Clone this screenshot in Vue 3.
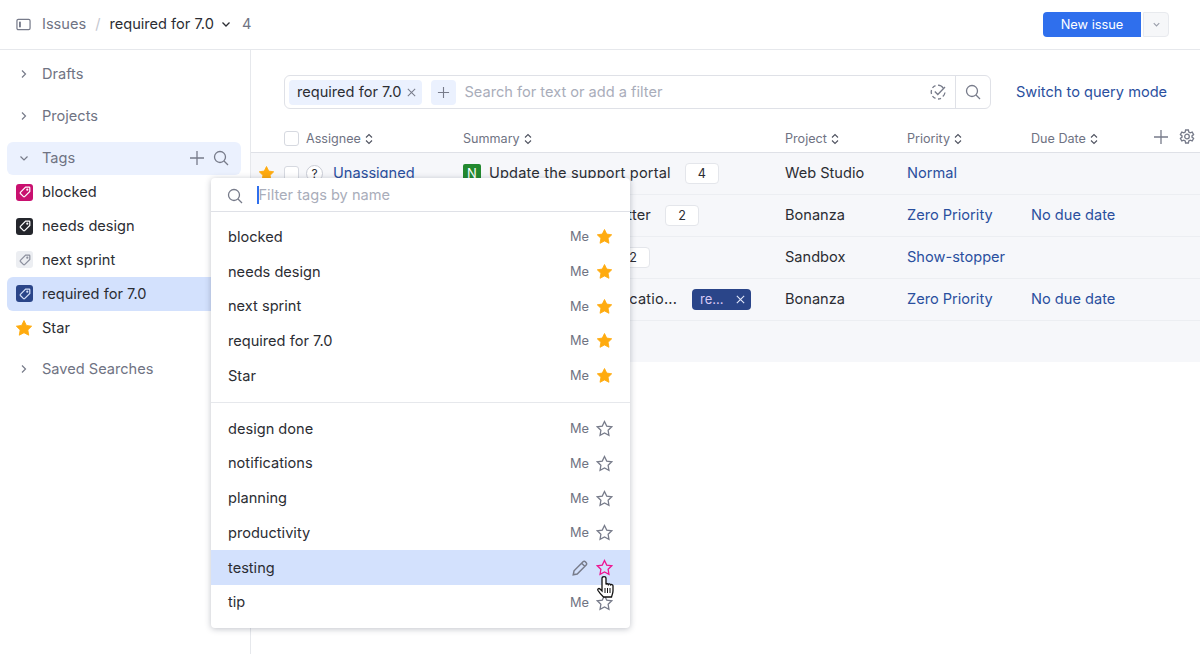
<template>
  <div class="page">
    <header class="topbar">
      <svg class="ico panel" viewBox="0 0 16 16"><rect x="1" y="2.5" width="14" height="11" rx="1.5" /><rect class="solid" x="3.2" y="5" width="2" height="6" /></svg>
      <span class="crumb">Issues</span>
      <span class="slash">/</span>
      <span class="current">required for 7.0</span>
      <svg class="ico caret" viewBox="0 0 12 12"><path d="M2.5 4.5 6 8l3.5-3.5" /></svg>
      <span class="total">4</span>
      <div class="top-actions">
        <button class="btn-new">New issue</button>
        <button class="btn-more"><svg viewBox="0 0 12 12"><path d="M3 4.5 6 7.5l3-3" /></svg></button>
      </div>
    </header>

    <div class="body">
      <aside class="sidebar">
        <div class="section"><svg class="chev" viewBox="0 0 12 12"><path d="M4 2.5 7.5 6 4 9.5" /></svg>Drafts</div>
        <div class="section"><svg class="chev" viewBox="0 0 12 12"><path d="M4 2.5 7.5 6 4 9.5" /></svg>Projects</div>
        <div class="section tags-head">
          <svg class="chev" viewBox="0 0 12 12"><path d="M2.5 4.5 6 8l3.5-3.5" /></svg>Tags
          <span class="head-icons">
            <svg class="ico plus" viewBox="0 0 16 16"><path d="M8 1v14M1 8h14" /></svg>
            <svg class="ico mag" viewBox="0 0 16 16"><circle cx="7" cy="7" r="5.5" /><path d="m11 11 4 4" /></svg>
          </span>
        </div>
        <div v-for="tag in sideTags" :key="tag.name" class="tag-row" :class="{ selected: tag.selected }">
          <span v-if="tag.color" class="tag-box" :style="{ background: tag.color }">
            <svg viewBox="0 0 14 14" :style="{ stroke: tag.stroke }"><path d="M7.6 2.2h3.6a.6.6 0 0 1 .6.6v3.6L6.6 11.6a.8.8 0 0 1-1.1 0L2.4 8.5a.8.8 0 0 1 0-1.1z" /><circle cx="9.3" cy="4.7" r=".5" /></svg>
          </span>
          <svg v-else class="side-star" viewBox="0 0 16 16"><path :d="starPath" /></svg>
          {{ tag.name }}
        </div>
        <div class="section saved"><svg class="chev" viewBox="0 0 12 12"><path d="M4 2.5 7.5 6 4 9.5" /></svg>Saved Searches</div>
      </aside>

      <main class="main">
        <div class="search-line">
          <div class="searchbox">
            <span class="chip">required for 7.0<svg viewBox="0 0 12 12"><path d="m2 2 8 8M10 2l-8 8" /></svg></span>
            <span class="add-filter"><svg viewBox="0 0 14 14"><path d="M7 1v12M1 7h12" /></svg></span>
            <span class="placeholder">Search for text or add a filter</span>
            <svg class="ico check" viewBox="0 0 16 16"><path d="M13.5 4.5A7 7 0 0 0 8 1.2M5.5 1.7a7 7 0 0 0-3 2.2M1.5 6a7 7 0 0 0 0 4M2.5 12.2a7 7 0 0 0 3 2.2M8 15a7 7 0 0 0 3-.7M12.8 12.5A7 7 0 0 0 15 8.5" /><path d="m4.8 7.5 3 3L15 3" /></svg>
            <span class="search-btn"><svg class="ico mag" viewBox="0 0 16 16"><circle cx="7" cy="7" r="5.5" /><path d="m11 11 4 4" /></svg></span>
          </div>
          <a class="query-link">Switch to query mode</a>
        </div>

        <div class="table-head">
          <span class="cell-star"></span>
          <span class="head-a"><span class="checkbox"></span><span class="th">Assignee<svg viewBox="0 0 8 12"><path d="M1 4.5 4 1.5l3 3M1 7.5l3 3 3-3" /></svg></span></span>
          <span class="th">Summary<svg viewBox="0 0 8 12"><path d="M1 4.5 4 1.5l3 3M1 7.5l3 3 3-3" /></svg></span>
          <span class="th">Project<svg viewBox="0 0 8 12"><path d="M1 4.5 4 1.5l3 3M1 7.5l3 3 3-3" /></svg></span>
          <span class="th">Priority<svg viewBox="0 0 8 12"><path d="M1 4.5 4 1.5l3 3M1 7.5l3 3 3-3" /></svg></span>
          <span class="th">Due Date<svg viewBox="0 0 8 12"><path d="M1 4.5 4 1.5l3 3M1 7.5l3 3 3-3" /></svg></span>
          <span class="table-tools">
            <svg class="ico plus" viewBox="0 0 16 16"><path d="M8 1v14M1 8h14" /></svg>
            <svg class="ico gear" viewBox="0 0 16 16"><path d="M6.6 1h2.8l.4 2 1.4.8 2-.7 1.4 2.4-1.6 1.4v1.2l1.6 1.4-1.4 2.4-2-.7-1.4.8-.4 2H6.600l-.4-2-1.400-.8-2 .7L1.400 9.500 3 8.100V6.900L1.400 5.500l1.400-2.400 2 .7 1.400-.8z" /><circle cx="8" cy="7.500" r="2.300" /></svg>
          </span>
        </div>

        <div class="rows">
          <div v-for="row in issues" :key="row.project + row.priority" class="row">
            <span class="cell-star"><svg v-if="row.starred" class="side-star" viewBox="0 0 16 16"><path :d="starPath" /></svg></span>
            <span class="head-a">
              <span class="checkbox"></span>
              <span class="unknown">?</span>
              <a class="link">Unassigned</a>
            </span>
            <span class="summary">
              <span class="type-badge">N</span>
              <span class="summary-text" :style="{ width: row.width + 'px' }">{{ row.summary }}</span>
              <span v-if="row.count" class="count">{{ row.count }}</span>
              <span v-if="row.tag" class="issue-tag"><i>re...</i><svg viewBox="0 0 12 12"><path d="m2 2 8 8M10 2l-8 8" /></svg></span>
            </span>
            <span class="project">{{ row.project }}</span>
            <a class="link">{{ row.priority }}</a>
            <a class="link">{{ row.due }}</a>
          </div>
          <div class="rows-end"></div>
        </div>
      </main>
    </div>

    <div class="popup">
      <div class="popup-search">
        <svg class="ico mag" viewBox="0 0 16 16"><circle cx="7" cy="7" r="5.500" /><path d="m11 11 4 4" /></svg>
        <span class="caret-line"></span>
        <span class="placeholder">Filter tags by name</span>
      </div>
      <div class="popup-list first">
        <div v-for="name in starredTags" :key="name" class="popup-item">
          <span class="item-name">{{ name }}</span>
          <span class="me">Me</span>
          <svg class="item-star on" viewBox="0 0 16 16"><path :d="starPath" /></svg>
        </div>
      </div>
      <div class="popup-list second">
        <div v-for="name in otherTags" :key="name" class="popup-item" :class="{ hover: name === 'testing' }">
          <span class="item-name">{{ name }}</span>
          <svg v-if="name === 'testing'" class="ico pencil" viewBox="0 0 16 16"><path d="M2 14l.7-3.500 8-8a1.400 1.400 0 0 1 2 0l.8.800a1.400 1.400 0 0 1 0 2l-8 8zM9.500 3.800l2.700 2.700" /></svg>
          <span v-else class="me">Me</span>
          <svg class="item-star" viewBox="0 0 16 16"><path :d="starPath" /></svg>
        </div>
      </div>
      <svg class="hand" viewBox="0 0 17 22"><path d="M5 2.500c0-2.400 4-2.400 4 0v6c.3-1 2-1 2.300 0 .4-.8 2-.7 2.200.3.600-.6 2.500-.3 2.500 1v5c0 2.500-1 4-1.500 6.200H6.500C5 19.500 2.500 17 1 14.500c-.8-1.500.8-2.700 2-1.500L5 15z" /><path class="lines" d="M8 12v5M10.500 12v5M13 12v5" /></svg>
    </div>
  </div>
</template>

<script setup>
const starPath = 'M8 1.400 10.100 5.700l4.700.7-3.400 3.300.8 4.700L8 12.200l-4.200 2.200.8-4.700-3.400-3.300 4.700-.7z'

const sideTags = [
  { name: 'blocked', color: '#c9106f', stroke: '#fff' },
  { name: 'needs design', color: '#24262c', stroke: '#fff' },
  { name: 'next sprint', color: '#eceef2', stroke: '#8a8e9c' },
  { name: 'required for 7.0', color: '#2a4589', stroke: '#d5e1fb', selected: true },
  { name: 'Star' },
]

const issues = [
  { starred: true, summary: 'Update the support portal', project: 'Web Studio', count: '4', priority: 'Normal', due: '' },
  { summary: 'Add promo newsletter', width: 162, count: '2', project: 'Bonanza', priority: 'Zero Priority', due: 'No due date' },
  { summary: 'Fix login page', width: 113, count: '2', project: 'Sandbox', priority: 'Show-stopper', due: '' },
  { summary: 'Improve push notificatio...', width: 188, tag: true, project: 'Bonanza', priority: 'Zero Priority', due: 'No due date' },
]

const starredTags = ['blocked', 'needs design', 'next sprint', 'required for 7.0', 'Star']
const otherTags = ['design done', 'notifications', 'planning', 'productivity', 'testing', 'tip']
</script>

<style>
html, body {
  margin: 0;
  background: #fff;
}
</style>

<style scoped>
.page {
  position: relative;
  width: 1200px;
  height: 654px;
  overflow: hidden;
  font-family: Inter, "Liberation Sans", sans-serif;
  font-size: 14.6px;
  color: #2b2d33;
  background: #fff;
}

svg {
  fill: none;
  flex: none;
}

.ico {
  stroke: #777b8a;
  stroke-width: 1.300;
}

.topbar {
  height: 48px;
  padding-bottom: 1px;
  display: flex;
  align-items: center;
  padding-left: 16px;
  border-bottom: 1px solid #e6e8ec;
}

.panel {
  width: 15px;
  height: 15px;
  margin-right: 11px;
}

.panel .solid {
  fill: #777b8a;
  stroke: none;
}

.crumb {
  color: #6f7383;
}

.slash {
  color: #c4c7d0;
  margin: 0 9px 0 9px;
}

.caret {
  width: 12px;
  height: 12px;
  margin: 0 0 0 6px;
  stroke: #2b2d33;
}

.total {
  color: #6f7383;
  margin-left: 10px;
}

.top-actions {
  margin-left: auto;
  margin-right: 31px;
  display: flex;
  gap: 2px;
}

.btn-new {
  width: 98px;
  height: 25px;
  border: 0;
  border-radius: 4px 0 0 4px;
  background: #2f6fed;
  color: #fff;
  font: 12.800px Inter, sans-serif;
  padding: 0;
}

.btn-more {
  width: 26px;
  height: 25px;
  padding: 0;
  border: 1px solid #e8eaee;
  border-radius: 0 4px 4px 0;
  background: #f6f7f9;
  display: flex;
  align-items: center;
  justify-content: center;
}

.btn-more svg {
  width: 11px;
  height: 11px;
  stroke: #9a9eab;
  stroke-width: 1.200;
}

.body {
  display: flex;
  height: 604px;
}

.sidebar {
  width: 251px;
  box-sizing: border-box;
  flex: none;
  border-right: 1px solid #e6e8ec;
  padding: 7.500px 9px 0 7px;
}

.section {
  height: 33px;
  margin-bottom: 9px;
  display: flex;
  align-items: center;
  border-radius: 6px;
  color: #6f7383;
}

.chev {
  width: 12px;
  height: 12px;
  margin: 0 12px 0 11px;
  stroke: #777b8a;
  stroke-width: 1.200;
}

.tags-head {
  background: #ebf1fe;
  margin-bottom: 1px;
}

.head-icons {
  margin-left: auto;
  margin-right: 12px;
  display: flex;
  align-items: center;
  gap: 8px;
}

.head-icons .plus,
.head-icons .mag {
  width: 16px;
  height: 16px;
}

.tag-row {
  height: 33.800px;
  display: flex;
  align-items: center;
  border-radius: 6px;
}

.tag-row.selected {
  background: #d3e1fd;
}

.tag-box {
  width: 17px;
  height: 17px;
  border-radius: 3px;
  margin: 0 9px;
  display: flex;
  align-items: center;
  justify-content: center;
}

.tag-box svg {
  width: 14px;
  height: 14px;
  stroke-width: 1.200;
}

.side-star {
  width: 18px;
  height: 18px;
  fill: #ffab0f;
  stroke: #ffab0f;
  stroke-width: 0.800;
  stroke-linejoin: round;
  margin: 0 9px 0 8px;
}

.saved {
  margin-top: 8px;
}

.main {
  flex: 1;
  min-width: 0;
}

.search-line {
  display: flex;
  align-items: center;
  padding: 25px 0 0 33px;
}

.searchbox {
  width: 707px;
  flex: none;
  height: 34px;
  box-sizing: border-box;
  border: 1px solid #dfe1e7;
  border-radius: 6px;
  padding-left: 4px;
  display: flex;
  align-items: center;
}

.chip {
  height: 25px;
  display: flex;
  align-items: center;
  gap: 5px;
  background: #ebf1fe;
  border-radius: 4px;
  padding: 0 5px 0 8px;
}

.chip svg {
  width: 11px;
  height: 11px;
  stroke: #777b8a;
  stroke-width: 1.100;
}

.add-filter {
  width: 25px;
  height: 25px;
  margin-left: 9px;
  background: #ebf1fe;
  border-radius: 4px;
  display: flex;
  align-items: center;
  justify-content: center;
}

.add-filter svg {
  width: 13px;
  height: 13px;
  stroke: #777b8a;
  stroke-width: 1.200;
}

.placeholder {
  color: #a9adba;
}

.searchbox .placeholder {
  margin-left: 8px;
}

.check {
  width: 16px;
  height: 16px;
  margin-left: auto;
  margin-right: 9px;
}

.search-btn {
  width: 34px;
  height: 32px;
  border-left: 1px solid #dfe1e7;
  display: flex;
  align-items: center;
  justify-content: center;
}

.search-btn svg {
  width: 16px;
  height: 16px;
}

.query-link,
.link {
  color: #2a4f9e;
}

.query-link {
  margin-left: 25px;
  white-space: nowrap;
}

.table-head,
.row {
  display: grid;
  grid-template-columns: 33px 179px 322px 122px 124px 1fr;
  align-items: center;
}

.table-head {
  position: relative;
  height: 27px;
  padding-top: 1px;
  margin-top: 15px;
  border-bottom: 1px solid #dfe1e7;
  box-sizing: content-box;
}

.head-a {
  display: flex;
  align-items: center;
}

.checkbox {
  width: 13px;
  height: 13px;
  border: 1px solid #d6d9e0;
  border-radius: 3px;
  background: #fff;
  margin-right: 7px;
}

.th {
  font-size: 12.600px;
  color: #6f7383;
  display: flex;
  align-items: center;
  gap: 4px;
}

.th svg {
  width: 8px;
  height: 12px;
  stroke: #4f5360;
  stroke-width: 1.100;
}

.table-tools {
  position: absolute;
  right: 5px;
  top: 5px;
  display: flex;
  align-items: center;
  gap: 10px;
}

.table-tools svg {
  width: 16px;
  height: 16px;
}

.rows {
  background: #f6f7fa;
}

.row {
  height: 40px;
  padding-bottom: 1px;
  box-sizing: content-box;
  border-bottom: 1px solid #eceef2;
}

.cell-star {
  display: flex;
  align-items: center;
}

.cell-star .side-star {
  width: 17px;
  height: 17px;
  margin: 0 0 0 7px;
}

.unknown {
  width: 15px;
  height: 15px;
  border: 1px solid #c9ccd5;
  border-radius: 50%;
  background: #fff;
  font-size: 12px;
  display: flex;
  align-items: center;
  justify-content: center;
  margin-right: 10px;
}

.summary {
  display: flex;
  align-items: center;
  white-space: nowrap;
}

.type-badge {
  width: 18px;
  height: 18px;
  flex: none;
  margin-right: 8px;
  border-radius: 2px;
  background: #23892f;
  color: #fff;
  font-size: 13px;
  display: flex;
  align-items: center;
  justify-content: center;
}

.summary-text {
  display: block;
  text-align: right;
  letter-spacing: 0.16px;
  overflow: hidden;
}

.count {
  width: 34px;
  height: 21px;
  margin-left: 14px;
  box-sizing: border-box;
  border: 1px solid #e4e6eb;
  border-radius: 4px;
  background: #fff;
  font-size: 12.600px;
  display: flex;
  align-items: center;
  justify-content: center;
}

.issue-tag {
  width: 59px;
  height: 21px;
  margin-left: 15px;
  border-radius: 4px;
  background: #2a4589;
  color: #d9c9f5;
  font-size: 13px;
  display: flex;
  align-items: center;
  justify-content: space-between;
  padding: 0 5px 0 8px;
  box-sizing: border-box;
}

.issue-tag i {
  font-style: normal;
}

.issue-tag svg {
  width: 11px;
  height: 11px;
  stroke: #e2e8fa;
  stroke-width: 1.200;
}

.rows-end {
  height: 41px;
}

.popup {
  position: absolute;
  left: 211px;
  top: 178px;
  width: 419px;
  height: 450px;
  background: #fff;
  border-radius: 4px;
  box-shadow: 0 1px 6px rgba(30, 35, 60, 0.28);
}

.popup-search {
  height: 33px;
  border-bottom: 1px solid #dfe1e7;
  display: flex;
  align-items: center;
  padding-left: 16px;
}

.popup-search svg {
  width: 16px;
  height: 16px;
  margin-top: 2px;
}

.caret-line {
  width: 1.500px;
  height: 18px;
  background: #2f6fed;
  margin-left: 14px;
}

.popup-list.first {
  padding-top: 7.500px;
  padding-bottom: 9.500px;
  border-bottom: 1px solid #e6e8ec;
}

.popup-list.second {
  padding-top: 8px;
}

.popup-item {
  height: 34.700px;
  display: flex;
  align-items: center;
  padding: 0 17px;
}

.popup-item.hover {
  background: #d3e1fd;
}

.item-name {
  flex: 1;
}

.me {
  font-size: 12.800px;
  color: #6f7383;
}

.item-star {
  width: 17px;
  height: 17px;
  margin-left: 7px;
  stroke: #777b8a;
  stroke-width: 1.200;
}

.item-star.on {
  fill: #ffab0f;
  stroke: #ffab0f;
  stroke-width: 0.800;
  stroke-linejoin: round;
}

.hover .item-star {
  stroke: #ee1290;
}

.pencil {
  width: 18px;
  height: 18px;
}

.hand {
  position: absolute;
  left: 386px;
  top: 398px;
  width: 17px;
  height: 22px;
  fill: #fff;
  stroke: #111;
  stroke-width: 1.300;
}

.hand .lines {
  stroke-width: 1;
}
</style>
